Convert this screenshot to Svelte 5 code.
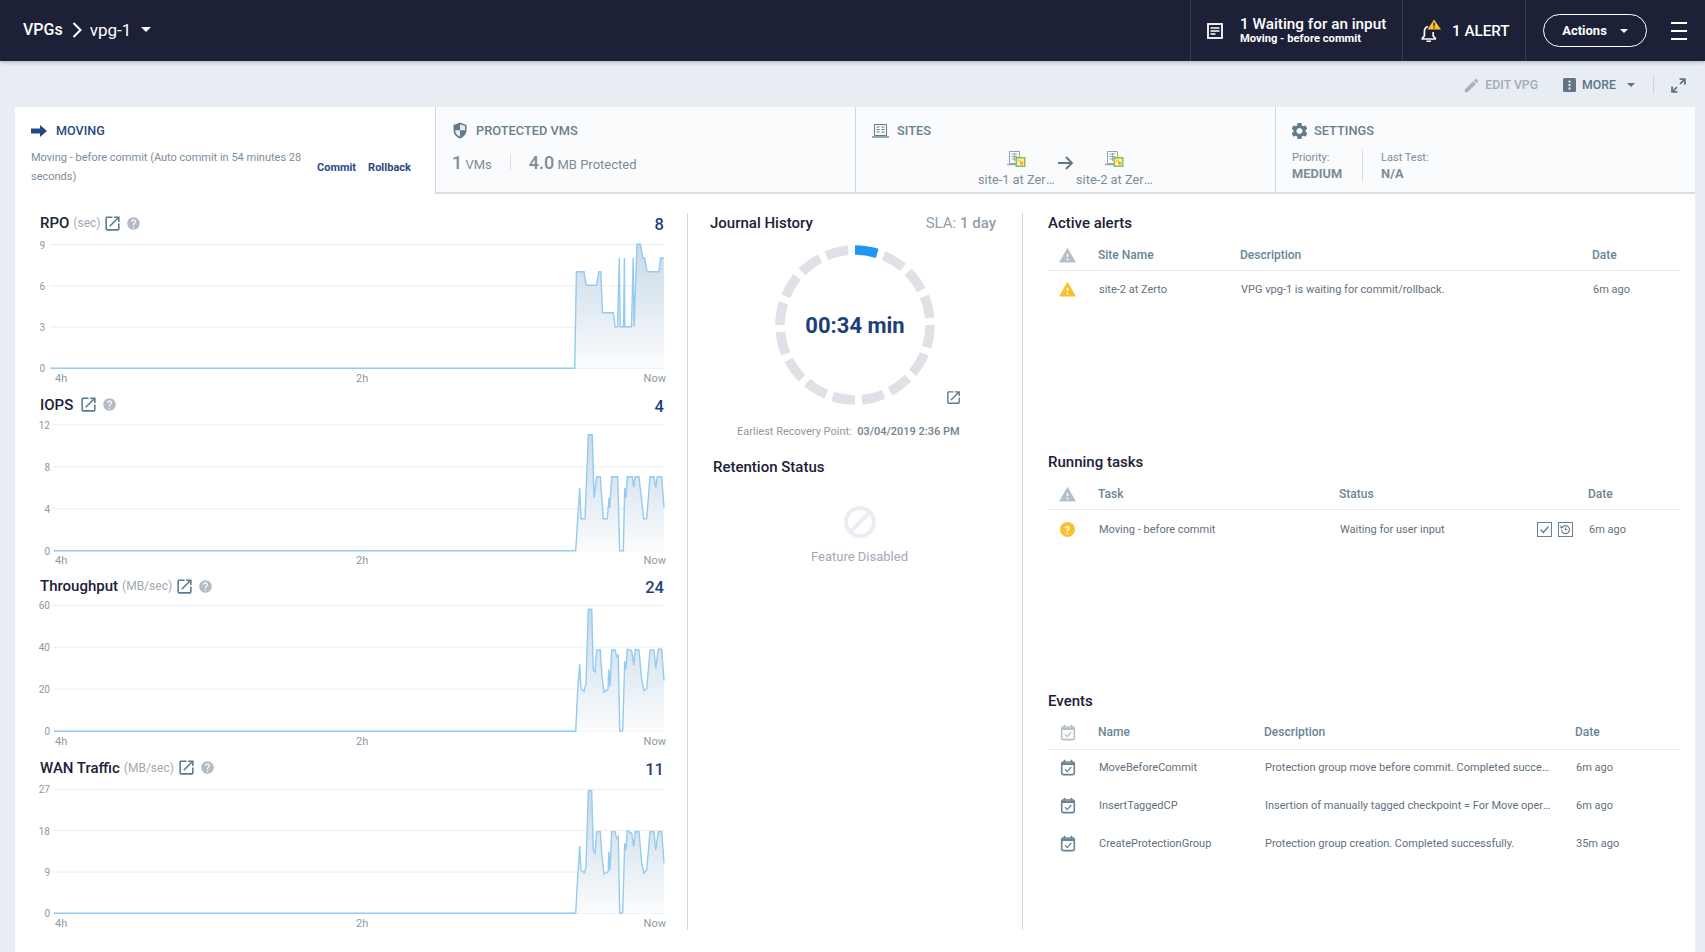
<script>
  const EXT = "M19 19H5V5h7V3H5c-1.11 0-2 .9-2 2v14c0 1.1.89 2 2 2h14c1.1 0 2-.9 2-2v-7h-2v7zM14 3v2h3.59l-9.83 9.83 1.41 1.41L19 6.41V10h2V3h-7z";
  const HELP = "M12 2C6.48 2 2 6.48 2 12s4.48 10 10 10 10-4.48 10-10S17.52 2 12 2zm1 17h-2v-2h2v2zm2.07-7.75l-.9.92C13.45 12.9 13 13.5 13 15h-2v-.5c0-1.1.45-2.1 1.17-2.83l1.24-1.26c.37-.36.59-.86.59-1.41 0-1.1-.9-2-2-2s-2 .9-2 2H8c0-2.21 1.79-4 4-4s4 1.79 4 4c0 .88-.36 1.68-.93 2.25z";
  const WARN = "M1 21h22L12 2 1 21zm12-3h-2v-2h2v2zm0-4h-2v-4h2v4z";
  const GEAR = "M19.14 12.94c.04-.3.06-.61.06-.94 0-.32-.02-.64-.07-.94l2.03-1.58c.18-.14.23-.41.12-.61l-1.92-3.32c-.12-.22-.37-.29-.59-.22l-2.39.96c-.5-.38-1.03-.7-1.62-.94l-.36-2.54c-.04-.24-.24-.41-.48-.41h-3.84c-.24 0-.43.17-.47.41l-.36 2.54c-.59.24-1.13.57-1.62.94l-2.39-.96c-.22-.08-.47 0-.59.22L2.74 8.87c-.12.21-.08.47.12.61l2.03 1.58c-.05.3-.07.62-.07.94s.02.64.07.94l-2.03 1.58c-.18.14-.23.41-.12.61l1.92 3.32c.12.22.37.29.59.22l2.39-.96c.5.38 1.03.7 1.62.94l.36 2.54c.05.24.24.41.48.41h3.84c.24 0 .44-.17.47-.41l.36-2.54c.59-.24 1.13-.56 1.62-.94l2.39.96c.22.08.47 0 .59-.22l1.92-3.32c.12-.22.07-.47-.12-.61l-2.01-1.58zM12 15.6c-1.98 0-3.6-1.62-3.6-3.6s1.62-3.6 3.6-3.6 3.6 1.62 3.6 3.6-1.62 3.6-3.6 3.6z";

  const rpoRaw = [[72,490],[1318,490],[1322,200],[1340,200],[1345,241],[1370,241],[1375,200],[1380,200],[1384,323],[1410,323],[1414,365],[1420,365],[1424,159],[1426,365],[1434,365],[1436,159],[1437,365],[1453,365],[1457,159],[1459,365],[1466,118],[1474,118],[1480,159],[1484,159],[1490,200],[1518,200],[1522,159],[1530,159]];
  const iopsRaw = [[-1458,451],[107,451],[113,355],[119,262],[123,355],[135,355],[145,103],[157,103],[162,292],[170,229],[181,229],[190,355],[202,355],[207,292],[209,322],[215,229],[233,229],[239,451],[250,451],[254,262],[258,292],[262,229],[277,229],[281,260],[285,229],[297,229],[311,355],[320,355],[330,229],[342,229],[347,262],[352,229],[365,229],[372,322]];
  const thrRaw = [[-1458,424],[107,424],[113,300],[119,222],[123,296],[132,304],[138,280],[145,58],[155,58],[160,240],[165,246],[170,180],[181,180],[186,260],[192,306],[204,298],[206,238],[210,290],[215,180],[225,180],[230,200],[235,195],[239,424],[248,422],[254,214],[258,238],[262,178],[275,182],[281,225],[286,178],[297,180],[305,270],[312,302],[320,296],[330,180],[342,180],[347,235],[355,178],[365,178],[372,272]];
  const wanRaw = [[-1458,430],[107,430],[113,320],[119,228],[123,300],[133,308],[138,290],[145,62],[155,62],[160,240],[165,250],[170,185],[181,185],[186,260],[192,312],[205,305],[206,245],[210,300],[215,185],[225,185],[230,205],[235,200],[239,430],[248,428],[254,220],[258,240],[262,182],[275,190],[281,230],[286,185],[297,185],[305,280],[312,310],[320,300],[330,185],[342,185],[347,240],[355,185],[365,185],[372,280]];

  const TOPS = [236, 417.5, 599, 781];
  function chart(id, title, unit, value, ticks, gt, gb, left, labelEnd, raw, fx, fy, idx) {
    const top = TOPS[idx];
    const step = (gb - gt) / (ticks.length - 1);
    const pts = raw.map(([x, y]) => [+(fx(x) - 30).toFixed(1), +(fy(y) - top).toFixed(1)]);
    const line = pts.map((p) => p.join(",")).join(" ");
    const first = pts[0], last = pts[pts.length - 1];
    const base = +(gb - top).toFixed(1);
    const area = line + ` ${last[0]},${base} ${first[0]},${base}`;
    return {
      id, title, unit, value, line, area, base,
      left: left - 30, labelEnd: labelEnd - 30,
      grid: ticks.map((t, i) => ({ t, y: +(gt - top + step * i).toFixed(1) }))
    };
  }
  const charts = [
    chart("a", "RPO", "(sec)", "8", [9,6,3,0], 244.5, 368.3, 50, 45, rpoRaw, (x) => 20 + x / 2.376, (y) => 205 + y / 3, 0),
    chart("b", "IOPS", "", "4", [12,8,4,0], 424.3, 550.3, 53, 50, iopsRaw, (x) => 540 + x / 3, (y) => 400 + y / 3, 1),
    chart("c", "Throughput", "(MB/sec)", "24", [60,40,20,0], 605.3, 731, 53, 50, thrRaw, (x) => 540 + x / 3, (y) => 590 + y / 3, 2),
    chart("d", "WAN Traffic", "(MB/sec)", "11", [27,18,9,0], 789.3, 913.3, 53, 50, wanRaw, (x) => 540 + x / 3, (y) => 770 + y / 3, 3)
  ];
  const ringDashes = Array.from({ length: 16 }, (_, i) => i);
  const events = [
    ["MoveBeforeCommit", "Protection group move before commit. Completed successfully.", "6m ago"],
    ["InsertTaggedCP", "Insertion of manually tagged checkpoint = For Move operation in progress", "6m ago"],
    ["CreateProtectionGroup", "Protection group creation. Completed successfully.", "35m ago"]
  ];
</script>

{#snippet siteIcon()}
  <svg class="siteic" width="19" height="17" viewBox="0 0 19 17">
    <path d="M2.500 .5h10v12h-10z" fill="#fff" stroke="#94a6b1" />
    <path d="M4.500 3h6M4.500 5.500h6M4.500 8h6M7.500 2v8" stroke="#94a6b1" stroke-width="1" />
    <path d="M0 13.500h14" stroke="#94a6b1" stroke-width="1.400" />
    <rect x="8.500" y="6" width="10" height="10" fill="#8bc34a" />
    <rect x="10.200" y="7.600" width="6.600" height="6.800" fill="#fff8dc" />
    <rect x="11" y="8.400" width="3.600" height="3" fill="#ffd54f" />
    <rect x="13" y="10.600" width="3" height="3" fill="#f9a825" />
  </svg>
{/snippet}

{#snippet calIcon(c)}
  <svg width="16" height="17" viewBox="0 0 16 17">
    <rect x="1.700" y="3" width="12.600" height="12.600" rx="1.500" fill="none" stroke={c} stroke-width="1.600" />
    <path d="M1.500 4h13v2h-13z" fill={c} />
    <path d="M4.500 .8v3M11.500 .8v3" stroke={c} stroke-width="1.600" />
    <path d="M5 10.200l2.300 2.400 4-4.600" fill="none" stroke={c} stroke-width="1.300" />
  </svg>
{/snippet}

<div class="page">
  <header class="top">
    <nav class="crumbs">
      <span class="vpgs">VPGs</span>
      <svg width="10" height="16" viewBox="0 0 10 16"><path d="M1.500 1L8.500 8l-7 7" fill="none" stroke="#fff" stroke-width="2" /></svg>
      <span class="vpgname">vpg-1</span>
      <span class="caret white big"></span>
    </nav>
    <div class="topright">
      <div class="tsec waiting">
        <svg width="16" height="16" viewBox="0 0 16 16">
          <rect x="1" y="1" width="14" height="14" fill="none" stroke="#fff" stroke-width="1.800" />
          <path d="M3.500 5h9M3.500 8h9M3.500 11h5" stroke="#fff" stroke-width="1.500" />
        </svg>
        <div class="wtxt">
          <div class="w1">1 Waiting for an input</div>
          <div class="w2">Moving - before commit</div>
        </div>
      </div>
      <div class="tsec alert">
        <svg width="23" height="24" viewBox="0 0 23 24">
          <path d="M9 7.500c-2.600.6-3.600 2.800-3.600 5.200v4.300l-2 2.200v.8h12.800v-.8l-2-2.200v-4" fill="none" stroke="#fff" stroke-width="1.700" />
          <path d="M7.500 21.500h4.500v1.500h-4.500z" fill="#fff" />
          <path d="M8.500 10.500L15 .5l7 10z" fill="#fbc02d" />
          <path d="M14.400 3.500h1.300v4h-1.300zM14.400 8.300h1.300v1.300h-1.300z" fill="#1c2138" />
        </svg>
        <span class="atxt">1 ALERT</span>
      </div>
      <div class="tsec last">
        <button class="actions">Actions <span class="caret white"></span></button>
        <div class="burger"><i></i><i></i><i></i></div>
      </div>
    </div>
  </header>

  <div class="toolbar">
    <span class="tool edit">
      <svg width="15" height="15" viewBox="2 2 20 20"><path d="M3 17.250V21h3.750L17.810 9.940l-3.750-3.750L3 17.250zM20.710 7.040c.39-.39.39-1.020 0-1.410l-2.340-2.340c-.39-.39-1.020-.39-1.410 0l-1.830 1.830 3.750 3.750 1.830-1.830z" fill="#a9b2ba" /></svg>
      EDIT VPG
    </span>
    <span class="tool more">
      <svg width="13" height="14" viewBox="0 0 13 14"><rect width="13" height="14" rx="1.500" fill="#5f7584" /><path d="M5.500 2.500h2v2h-2zM5.500 6h2v2h-2zM5.500 9.500h2v2h-2z" fill="#e8edf4" /></svg>
      MORE <span class="caret gray"></span>
    </span>
    <span class="tdiv"></span>
    <svg class="expand" width="15" height="15" viewBox="0 0 14 14">
      <path d="M8 1h5v5M13 1L8.500 5.500M6 13H1V8M1 13l4.500-4.500" fill="none" stroke="#5f7584" stroke-width="1.700" />
    </svg>
  </div>

  <main class="panel">
    <section class="cards">
      <div class="card active">
        <div class="chead">
          <svg width="16" height="12" viewBox="0 0 16 12"><path d="M0 3.500h9V0l7 6-7 6V8.500H0z" fill="#234a87" /></svg>
          <span class="ctitle blue">MOVING</span>
        </div>
        <div class="movebody">
          <p>Moving - before commit (Auto commit in 54 minutes 28 seconds)</p>
          <span class="lnk">Commit</span>
          <span class="lnk">Rollback</span>
        </div>
      </div>
      <div class="card">
        <div class="chead">
          <svg width="16" height="17" viewBox="0 0 16 17"><path d="M8 .5L1.500 3v5c0 4 2.800 7.300 6.500 8.500 3.700-1.200 6.500-4.500 6.500-8.500V3z" fill="#637b89" /><path d="M8 2.200v6H13V3.800zM8 8.200H3c.2 2.900 2.300 5.500 5 6.500z" fill="#e4eaee" /></svg>
          <span class="ctitle">PROTECTED VMS</span>
        </div>
        <div class="metrics">
          <span><b>1</b> VMs</span>
          <span class="mdiv"></span>
          <span><b>4.0</b> MB Protected</span>
        </div>
      </div>
      <div class="card">
        <div class="chead">
          <svg width="17" height="14" viewBox="0 0 17 14"><path d="M2.500 .5h12v11h-12z" fill="none" stroke="#637b89" /><path d="M4.500 3h3M9.500 3h3M4.500 5.500h3M9.500 5.500h3M4.500 8h3M9.500 8h3" stroke="#637b89" /><path d="M0 13h17" stroke="#637b89" stroke-width="1.300" /></svg>
          <span class="ctitle">SITES</span>
        </div>
        <div class="sites">
          <div class="site">{@render siteIcon()}<span>site-1 at Zerto</span></div>
          <svg class="sarrow" width="21" height="16" viewBox="0 0 21 16"><path d="M3 8h14M11 2l6 6-6 6" fill="none" stroke="#5f7584" stroke-width="1.800" /></svg>
          <div class="site">{@render siteIcon()}<span>site-2 at Zerto</span></div>
        </div>
      </div>
      <div class="card">
        <div class="chead">
          <svg class="gear" width="15" height="16" viewBox="3 2.500 18 19"><path d={GEAR} fill="#637b89" /></svg>
          <span class="ctitle">SETTINGS</span>
        </div>
        <div class="setts">
          <div class="sett"><small>Priority:</small><b>MEDIUM</b></div>
          <div class="sett second"><small>Last Test:</small><b>N/A</b></div>
        </div>
      </div>
    </section>

    <section class="content">
      <div class="col left">
        {#each charts as c}
          <article class="chart">
            <div class="chtop">
              <span class="chtitle">{c.title}</span>
              {#if c.unit}<span class="chunit">{c.unit}</span>{/if}
              <svg class="chext" class:nounit={!c.unit} width="19" height="19" viewBox="0 0 24 24"><path d={EXT} fill="#5d7b8c" /></svg>
              <svg class="chhelp" width="15" height="15" viewBox="0 0 24 24"><path d={HELP} fill="#b3bcc4" /></svg>
              <span class="chval">{c.value}</span>
            </div>
            <svg class="plot" width="640" height="151" viewBox="0 0 640 151">
              <defs>
                <linearGradient id={"g" + c.id} x1="0" y1="0" x2="0" y2="1">
                  <stop offset="0" stop-color="#c9d9e7" />
                  <stop offset="1" stop-color="#fbfcfd" />
                </linearGradient>
              </defs>
              {#each c.grid as g}
                <line x1={c.left} x2="634" y1={g.y} y2={g.y} stroke="#ececf0" />
                <text class="ylab" x={c.labelEnd} y={g.y + 4}>{g.t}</text>
              {/each}
              <polygon points={c.area} fill={"url(#g" + c.id + ")"} />
              <polyline points={c.line} fill="none" stroke="#93cbf1" stroke-width="1.400" />
              <text class="xlab" x="25" y={c.base + 13.500}>4h</text>
              <text class="xlab" x="326" y={c.base + 13.500}>2h</text>
              <text class="xlab end" x="636" y={c.base + 13.500}>Now</text>
            </svg>
          </article>
        {/each}
      </div>

      <div class="col mid">
        <div class="jhead">
          <h3>Journal History</h3>
          <span class="sla">SLA: <em>1 day</em></span>
        </div>
        <div class="ringwrap">
          <svg width="170" height="170" viewBox="-85 -85 170 170">
            {#each ringDashes as i}
              <circle r="75" fill="none" stroke={i === 0 ? "#2196f3" : "#e0e1e7"} stroke-width="9.500"
                pathLength="160" stroke-dasharray="7.700 2.300 0 150"
                transform={"rotate(" + (i * 22.500 - 90) + ")"} />
            {/each}
          </svg>
          <div class="ringtxt">00:34 min</div>
          <svg class="ringext" width="17" height="17" viewBox="0 0 24 24"><path d={EXT} fill="#5d7b8c" /></svg>
        </div>
        <div class="earliest">Earliest Recovery Point:&nbsp; <b>03/04/2019 2:36 PM</b></div>
        <h3 class="ret">Retention Status</h3>
        <div class="disabled">
          <svg width="32" height="32" viewBox="0 0 32 32"><circle cx="16" cy="16" r="14" fill="none" stroke="#e8edf4" stroke-width="4" /><path d="M6.500 25.500L25.500 6.500" stroke="#e8edf4" stroke-width="4" /></svg>
          <span>Feature Disabled</span>
        </div>
      </div>

      <div class="col right">
        <div class="tblsec">
          <h3>Active alerts</h3>
          <div class="row thead alerts">
            <svg width="17" height="17" viewBox="1 1 22 22"><path d={WARN} fill="#b3c0c9" /></svg>
            <span>Site Name</span><span>Description</span><span>Date</span>
          </div>
          <div class="row tbody alerts">
            <svg width="17" height="17" viewBox="1 1 22 22"><path d={WARN} fill="#fbc02d" /></svg>
            <span>site-2 at Zerto</span><span>VPG vpg-1 is waiting for commit/rollback.</span><span>6m ago</span>
          </div>
        </div>
        <div class="tblsec">
          <h3>Running tasks</h3>
          <div class="row thead tasks">
            <svg width="17" height="17" viewBox="1 1 22 22"><path d={WARN} fill="#b3c0c9" /></svg>
            <span>Task</span><span>Status</span><span></span><span>Date</span>
          </div>
          <div class="row tbody tasks">
            <svg class="qic" width="15" height="15" viewBox="0 0 15 15"><circle cx="7.500" cy="7.500" r="7.500" fill="#fbc02d" /><text x="7.500" y="11.500" class="qm">?</text></svg>
            <span>Moving - before commit</span><span>Waiting for user input</span>
            <span class="btns">
              <span class="sq"><svg width="11" height="11" viewBox="0 0 11 11"><path d="M1.500 5.500l2.800 3 5.200-6" fill="none" stroke="#5d7b8c" stroke-width="1.200" /></svg></span>
              <span class="sq"><svg width="11" height="11" viewBox="0 0 11 11"><path d="M2.300 3.200a4 4 0 1 1-.8 2.600M1 1.500v2.300h2.300M5.500 3.500v2.200h2" fill="none" stroke="#5d7b8c" stroke-width="1.100" /></svg></span>
            </span>
            <span>6m ago</span>
          </div>
        </div>
        <div class="tblsec events">
          <h3>Events</h3>
          <div class="row thead evs">
            {@render calIcon("#b3c0c9")}
            <span>Name</span><span>Description</span><span>Date</span>
          </div>
          {#each events as e}
            <div class="row tbody evs">
              {@render calIcon("#6a8292")}
              <span>{e[0]}</span><span class="clip">{e[1]}</span><span>{e[2]}</span>
            </div>
          {/each}
        </div>
      </div>
    </section>
  </main>
</div>

<style>
  :global(body) { margin: 0; background: #e8edf4; font-family: Roboto, "Liberation Sans", sans-serif; overflow: hidden; }
  .page { height: 952px; display: flex; flex-direction: column; }
  h3 { margin: 0; font-size: 15px; font-weight: 500; color: #1c2138; line-height: 34px; }
  .top { height: 61px; flex: none; background: #1c2138; display: flex; justify-content: space-between; box-shadow: 0 1px 4px rgba(40,50,70,.35); color: #fff; position: relative; }
  .crumbs { display: flex; align-items: center; padding: 0 0 2px 23px; }
  .vpgs { font-size: 16px; font-weight: 500; }
  .crumbs svg { margin: 0 8px 0 9px; }
  .vpgname { font-size: 17px; }
  .caret { display: inline-block; width: 0; height: 0; border-left: 4px solid transparent; border-right: 4px solid transparent; border-top: 4px solid #fff; }
  .caret.big { border-left-width: 5px; border-right-width: 5px; border-top-width: 5px; margin-left: 10px; }
  .caret.gray { border-top-color: #5f7584; margin-left: 5px; }
  .topright { display: flex; }
  .tsec { display: flex; align-items: center; border-left: 1px solid #373c50; box-sizing: border-box; }
  .waiting { width: 212px; padding-left: 16px; gap: 17px; }
  .wtxt { line-height: 1; }
  .w1 { font-size: 15.300px; font-weight: 500; line-height: 17px; }
  .w2 { font-size: 11.200px; font-weight: 700; line-height: 12px; }
  .alert { width: 123px; padding-left: 16px; gap: 10px; }
  .atxt { font-size: 15.200px; font-weight: 500; }
  .last { width: 180px; padding-left: 17px; }
  .actions { width: 104px; height: 33px; border: 1px solid #fff; border-radius: 17px; background: none; color: #fff; font: 700 13px Roboto, sans-serif; padding: 0; display: flex; align-items: center; justify-content: center; gap: 13px; }
  .burger { margin-left: 24px; width: 16px; display: flex; flex-direction: column; gap: 6px; }
  .burger i { display: block; height: 2px; background: #fff; }

  .toolbar { height: 46px; flex: none; display: flex; align-items: center; justify-content: flex-end; padding: 2px 19px 0 0; box-sizing: border-box; font-size: 12.300px; font-weight: 500; }
  .tool { display: flex; align-items: center; gap: 6px; }
  .edit { color: #a3abb3; margin-right: 25px; }
  .more { color: #5f7584; }
  .tdiv { width: 1px; height: 18px; background: #ccd3da; margin: 0 17px 0 18px; }

  .panel { flex: 1; margin: 0 10px 0 15px; background: #fff; display: flex; flex-direction: column; min-height: 0; }
  .cards { height: 87px; flex: none; display: grid; grid-template-columns: 421px 420px 420px 1fr; }
  .card { background: #fafbfd; border-right: 1px solid #cfd8df; border-bottom: 2px solid #d8dfe5; padding: 15px 16px 0; box-sizing: border-box; min-width: 0; color: #7c8d9a; }
  .card:last-child { border-right: 0; }
  .card.active { background: #fff; border-bottom: 0; }
  .chead { display: flex; align-items: center; gap: 8px; height: 17px; }
  .ctitle { font-size: 12.800px; font-weight: 500; color: #6a7f8d; }
  .ctitle.blue { color: #2a4a85; margin-left: 1px; font-size: 12.600px; }
  .gear { margin-right: -1px; }
  .movebody { display: flex; align-items: center; margin-top: 10px; }
  .movebody p { margin: 0; width: 272px; flex: none; font-size: 11px; line-height: 18.500px; }
  .lnk { font-size: 11px; font-weight: 700; color: #2a4a85; margin-left: 12px; }
  .movebody p + .lnk { margin-left: 14px; }
  .metrics { display: flex; align-items: center; margin-top: 11px; font-size: 13px; height: 24px; }
  .metrics b { font-size: 18px; font-weight: 500; }
  .mdiv { width: 1px; height: 16px; background: #d6dde3; margin: 0 18px; }
  .sites { display: flex; justify-content: center; margin-top: 12px; }
  .site { width: 77px; display: flex; flex-direction: column; align-items: center; }
  .site span { width: 100%; font-size: 12.800px; line-height: 17px; white-space: nowrap; overflow: hidden; text-overflow: ellipsis; margin-top: 3px; }
  .sarrow { margin-top: 4px; }
  .siteic { display: block; }
  .setts { display: flex; margin-top: 11px; }
  .sett { display: flex; flex-direction: column; padding-right: 20px; }
  .sett small { font-size: 11px; line-height: 16px; }
  .sett b { font-size: 12.800px; font-weight: 700; line-height: 16px; }
  .sett.second { border-left: 1px solid #d6dde3; padding-left: 18px; }

  .content { flex: 1; display: grid; grid-template-columns: 673px 335px 1fr; padding-top: 12px; min-height: 0; }
  .col { position: relative; box-sizing: border-box; min-width: 0; }
  .col.left::after, .col.mid::after { content: ""; position: absolute; right: 0; top: 7px; height: 717px; width: 1px; background: #cfd8df; }

  .left { padding-left: 15px; }
  .chart { height: 181.500px; width: 640px; }
  .chtop { height: 30px; display: flex; align-items: center; gap: 4px; padding: 4px 5px 0 10px; box-sizing: border-box; }
  .chtitle { font-size: 15px; font-weight: 500; color: #1c2138; }
  .chunit { font-size: 12px; color: #a0aab4; margin-right: -1px; }
  .chext.nounit { margin-left: 2px; }
  .chval { margin: 3px 0 0 auto; padding-right: 1px; font-size: 16.500px; font-weight: 500; color: #1f3f78; }
  .plot { display: block; }
  .ylab { font-size: 10px; fill: #8a9aa6; text-anchor: end; }
  .xlab { font-size: 11px; fill: #8a9aa6; }
  .xlab.end { text-anchor: end; }

  .mid { padding: 0 27px 0 22px; }
  .jhead { display: flex; justify-content: space-between; align-items: center; height: 34px; }
  .sla { font-size: 15px; color: #90a0ac; }
  .sla em { font-style: normal; font-weight: 500; }
  .ringwrap { position: relative; width: 170px; height: 170px; margin-left: 60px; }
  .ringwrap > svg:first-child { display: block; }
  .ringtxt { position: absolute; inset: 0; display: flex; align-items: center; justify-content: center; font-size: 22px; font-weight: 700; color: #1f3f78; }
  .ringext { position: absolute; left: 175px; top: 149px; }
  .earliest { margin-top: 14px; padding-left: 27px; font-size: 11px; line-height: 16px; color: #8a9aa6; white-space: nowrap; }
  .earliest b { font-weight: 500; color: #6f8290; }
  .ret { margin-top: 10px; padding-left: 3px; line-height: 34px; }
  .disabled { display: flex; flex-direction: column; align-items: center; margin-top: 22px; padding-left: 13px; }
  .disabled span { margin-top: 11px; font-size: 13px; line-height: 16px; color: #a0aab4; }

  .right { padding: 0 15px 0 25px; }
  .tblsec { height: 239px; }
  .row { display: grid; align-items: center; font-size: 11px; color: #5f7180; }
  .row > svg { justify-self: center; margin-right: 11px; }
  .alerts { grid-template-columns: 50px 142px 352px 1fr; }
  .tasks { grid-template-columns: 50px 241px 198px 51px 1fr; }
  .evs { grid-template-columns: 50px 166px 311px 1fr; }
  .thead { height: 30px; border-bottom: 1px solid #e8ecf0; font-size: 12px; font-weight: 500; color: #6a8595; }
  .thead + .tbody { margin-top: -1px; }
  .thead.tasks + .tbody { margin-top: 0; }
  .events .thead { height: 28px; padding-bottom: 3px; }
  .events .thead + .tbody { margin-top: -2px; }
  .tbody { height: 38px; }
  .tbody span { padding-left: 1px; }
  .qm { font-size: 11px; font-weight: 700; fill: #fff; text-anchor: middle; }
  .clip { white-space: nowrap; overflow: hidden; text-overflow: ellipsis; padding-right: 22px; }
  .btns { display: flex; gap: 6px; padding-left: 0 !important; }
  .sq { width: 15px; height: 15px; border: 1px solid #6a8292; display: flex; align-items: center; justify-content: center; box-sizing: border-box; padding: 0 !important; }
</style>
